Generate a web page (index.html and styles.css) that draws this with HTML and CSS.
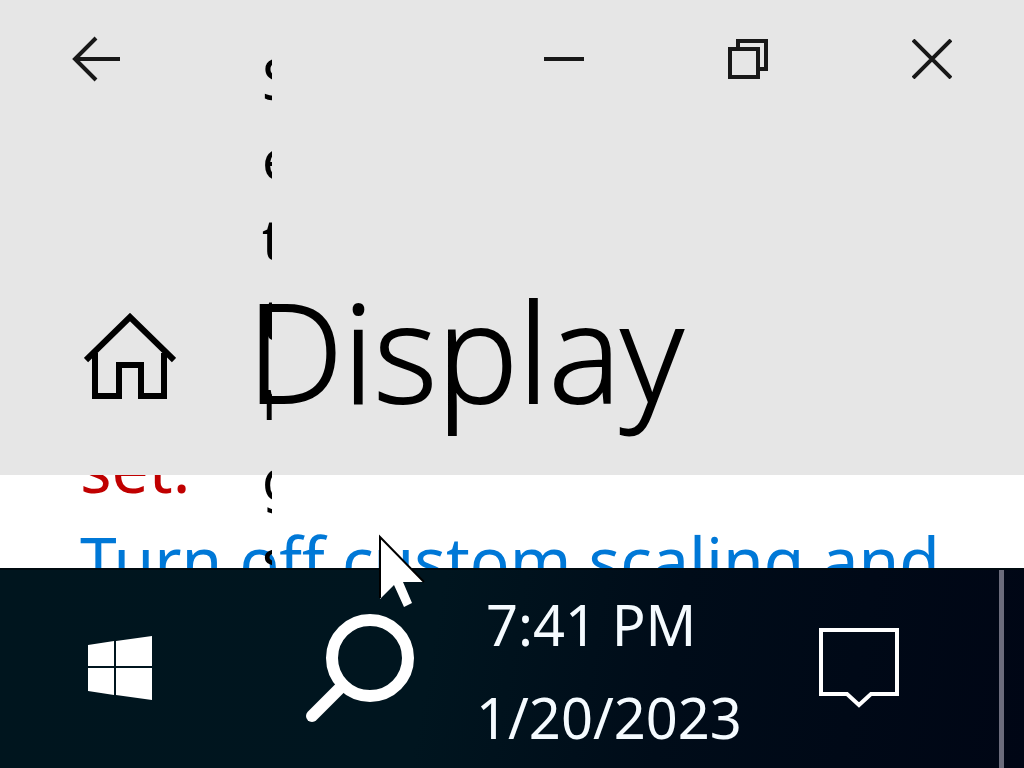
FILE: index.html
```html
<!DOCTYPE html>
<html lang="en">
<head>
<meta charset="utf-8">
<title>Settings</title>
<link rel="stylesheet" href="styles.css">
</head>
<body>
<main class="window">
  <header class="header">
    <div class="titlebar">
      <button class="icon-button" aria-label="Back"><svg width="48" height="48" viewBox="0 0 48 48"><path d="M48 24H3M24 3L3 24l21 21"/></svg></button>
      <span class="app-name">S<br>e<br>t<br>ti<br>n<br>g<br>s</span>
      <div class="window-controls">
        <button class="icon-button" aria-label="Minimize"><svg width="40" height="40" viewBox="0 0 40 40"><path d="M0 20H40"/></svg></button>
        <button class="icon-button" aria-label="Restore"><svg width="40" height="40" viewBox="0 0 40 40"><path d="M2 10H30V38H2ZM10 10V2H38V30H30"/></svg></button>
        <button class="icon-button" aria-label="Close"><svg width="40" height="40" viewBox="0 0 40 40"><path d="M1 1L39 39M39 1L1 39"/></svg></button>
      </div>
    </div>
    <div class="heading">
      <button class="icon-button" aria-label="Home"><svg class="home" width="92" height="88" viewBox="0 0 92 88"><path d="M2 47L46 4L90 47M11 40V83H35V52H57V83H80V40"/></svg></button>
      <h1 class="title">Display</h1>
    </div>
  </header>
  <section class="content">
    <p class="warning">set.</p>
    <a class="link" href="#scaling">Turn off custom scaling and</a>
  </section>
</main>
<footer class="taskbar">
  <button class="icon-button" aria-label="Start"><svg class="solid" width="64" height="66" viewBox="0 0 64 66"><path d="M0 9L26 5V30H0ZM28 5L64 0V30H28ZM0 32H26V59L0 55ZM28 32H64V64L28 59Z"/></svg></button>
  <button class="icon-button search" aria-label="Search"><svg width="110" height="112" viewBox="0 0 110 112"><circle cx="65" cy="45" r="38"/><path d="M38 72L7 103"/></svg></button>
  <div class="clock"><time class="time">7:41 PM</time><time>1/20/2023</time></div>
  <button class="icon-button notifications" aria-label="Notifications"><svg width="80" height="82" viewBox="0 0 80 82"><path d="M2 2H78V66H52L40 77L28 66H2Z"/></svg></button>
  <button class="show-desktop" aria-label="Show desktop"></button>
</footer>
<svg class="cursor" width="50" height="76" viewBox="0 0 50 76"><path d="M2 3V65L16 51L26 73L34 69L25 48H46Z" fill="#fff"/><path d="M2 64V3L46 48" fill="none" stroke="#000" stroke-width="2"/></svg>
</body>
</html>
```

FILE: styles.css
```css
* {
  box-sizing: border-box;
}

body {
  margin: 0;
  height: 100vh;
  display: flex;
  flex-direction: column;
  position: relative;
  overflow: hidden;
  font-family: "Noto Sans", "Open Sans", sans-serif;
  font-size: 56px;
  line-height: 80px;
  color: #000;
}

.window {
  flex: 1;
  min-height: 0;
  display: flex;
  flex-direction: column;
  overflow: hidden;
  background: #fff;
}

.header {
  flex: none;
  position: relative;
  z-index: 1;
  padding: 35px 72px 32px;
  background: #e6e6e6;
}

.titlebar,
.window-controls,
.heading {
  display: flex;
  align-items: center;
  justify-content: space-between;
}

.window-controls {
  gap: 144px;
}

.icon-button {
  flex: none;
  display: block;
  padding: 0;
  border: 0;
  background: none;
  color: inherit;
}

.icon-button svg {
  display: block;
  fill: none;
  stroke: #181818;
  stroke-width: 4;
}

.app-name {
  position: absolute;
  left: 262px;
  top: 38px;
  width: 10px;
  height: 530px;
  overflow: hidden;
}

.heading {
  justify-content: flex-start;
  align-items: flex-start;
  gap: 71px;
  padding: 176px 12px 0;
}

.icon-button .home {
  margin-top: 54px;
  stroke: #000;
  stroke-width: 6;
}

.title {
  margin: 0;
  font-family: "Open Sans", "Noto Sans", sans-serif;
  font-size: 136px;
  line-height: 184px;
  font-weight: 300;
  -webkit-text-stroke: 2px #000;
}

.content {
  padding: 0 80px;
  font-size: 66px;
  line-height: 88px;
  white-space: nowrap;
}

.warning {
  margin: -52px 0 4px;
  color: #c00000;
}

.link {
  color: #0078d7;
  text-decoration: none;
}

.taskbar {
  flex: none;
  display: flex;
  align-items: center;
  padding: 0 20px 0 88px;
  border-top: 2px solid #000a10;
  background: linear-gradient(100deg, #00151e 0%, #00151f 42%, #000c19 65%, #000615 100%);
  color: #f5fbff;
}

.taskbar .icon-button svg {
  stroke: #fff;
}

.taskbar .icon-button .solid {
  fill: #fff;
  stroke: none;
}

.taskbar .search {
  margin-left: 153px;
}

.taskbar .search svg {
  stroke-width: 12;
  stroke-linecap: round;
}

.clock {
  display: flex;
  flex-direction: column;
  margin-left: 61px;
  padding: 8px 0 4px;
  line-height: 93px;
}

.time {
  padding-left: 10px;
}

.notifications {
  margin-left: auto;
  margin-right: 100px;
}

.show-desktop {
  align-self: stretch;
  width: 5px;
  padding: 0;
  border: 0;
  background: #6b6c7c;
}

.cursor {
  position: absolute;
  left: 378px;
  top: 534px;
}
```
